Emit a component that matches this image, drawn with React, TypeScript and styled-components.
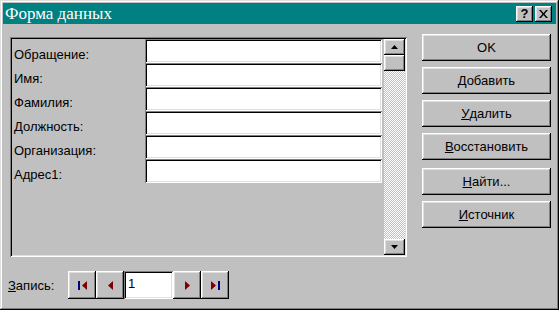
import React from "react";
import styled, { createGlobalStyle, css } from "styled-components";

const fields = ["Обращение:", "Имя:", "Фамилия:", "Должность:", "Организация:", "Адрес1:"];

function App() {
  return (
    <>
      <GlobalStyle />
      <Window>
        <TitleBar>
          <Title>Форма данных</Title>
          <CaptionButtons>
            <CaptionButton>?</CaptionButton>
            <CaptionButton>
              <svg width="9" height="8" viewBox="0 0 9 8">
                <path d="M0 0h2l2.5 3 2.5-3h2L5.5 4 9 8H7L4.5 5 2 8H0l3.5-4z" fill="#000" />
              </svg>
            </CaptionButton>
          </CaptionButtons>
        </TitleBar>
        <Body>
          <LeftColumn>
            <Panel>
              <Fields>
                {fields.map((f) => (
                  <Row key={f}>
                    <Label>{f}</Label>
                    <Field />
                  </Row>
                ))}
              </Fields>
              <ScrollBar>
                <ScrollButton>
                  <svg width="7" height="4" viewBox="0 0 7 4">
                    <path d="M3.5 0L7 4H0z" fill="#000" />
                  </svg>
                </ScrollButton>
                <ScrollButton />
                <Track />
                <ScrollButton>
                  <svg width="7" height="4" viewBox="0 0 7 4">
                    <path d="M0 0h7L3.5 4z" fill="#000" />
                  </svg>
                </ScrollButton>
              </ScrollBar>
            </Panel>
            <RecordRow>
              <RecordLabel>
                <u>З</u>апись:
              </RecordLabel>
              <NavButton>
                <svg width="9" height="9" viewBox="0 0 9 9">
                  <rect x="0" y="0" width="2" height="9" fill="#000080" />
                  <path d="M9 0v9L4 4.5z" fill="#800000" />
                </svg>
              </NavButton>
              <NavButton>
                <svg width="5" height="9" viewBox="0 0 5 9">
                  <path d="M5 0v9L0 4.5z" fill="#800000" />
                </svg>
              </NavButton>
              <RecordInput>1</RecordInput>
              <NavButton>
                <svg width="5" height="9" viewBox="0 0 5 9">
                  <path d="M0 0v9l5-4.5z" fill="#800000" />
                </svg>
              </NavButton>
              <NavButton>
                <svg width="9" height="9" viewBox="0 0 9 9">
                  <path d="M0 0v9l5-4.5z" fill="#800000" />
                  <rect x="7" y="0" width="2" height="9" fill="#000080" />
                </svg>
              </NavButton>
            </RecordRow>
          </LeftColumn>
          <RightColumn>
            <Button>OK</Button>
            <Button>
              <u>Д</u>обавить
            </Button>
            <Button>
              <u>У</u>далить
            </Button>
            <Button>
              <u>В</u>осстановить
            </Button>
            <Button spaced>
              <u>Н</u>айти...
            </Button>
            <Button>
              <u>И</u>сточник
            </Button>
          </RightColumn>
        </Body>
      </Window>
    </>
  );
}

export default App;

const GlobalStyle = createGlobalStyle`
  html, body {
    margin: 0;
    padding: 0;
    background: #c0c0c0;
  }
  * {
    box-sizing: border-box;
  }
`;

const raised = css`
  background: #c0c0c0;
  box-shadow: inset -1px -1px #000, inset 1px 1px #fff, inset -2px -2px #808080,
    inset 2px 2px #dfdfdf;
`;

const sunken = css`
  background: #fff;
  box-shadow: inset 1px 1px #808080, inset -1px -1px #fff, inset 2px 2px #000,
    inset -2px -2px #dfdfdf;
`;

const Window = styled.div`
  width: 559px;
  height: 310px;
  padding: 3px;
  background: #c0c0c0;
  box-shadow: inset -1px -1px #000, inset 1px 1px #dfdfdf, inset -2px -2px #808080,
    inset 2px 2px #fff;
  display: flex;
  flex-direction: column;
  font-family: "Liberation Sans", Arial, sans-serif;
  font-size: 13px;
  color: #000;
`;

const TitleBar = styled.div`
  height: 21px;
  background: #008080;
  display: flex;
  align-items: center;
  justify-content: space-between;
  padding: 0 4px 0 2px;
`;

const Title = styled.div`
  font-family: "Liberation Serif", "Times New Roman", serif;
  font-size: 17px;
  color: #fff;
  line-height: 21px;
`;

const CaptionButtons = styled.div`
  display: flex;
  gap: 2px;
`;

const CaptionButton = styled.div`
  ${raised};
  width: 17px;
  height: 16px;
  display: flex;
  align-items: center;
  justify-content: center;
  font-weight: 700;
  font-size: 13px;
  line-height: 16px;
`;

const Body = styled.div`
  flex: 1;
  display: flex;
  padding-left: 4px;
  gap: 15px;
`;

const LeftColumn = styled.div`
  width: 400px;
  display: flex;
  flex-direction: column;
  padding-top: 13px;
`;

const Panel = styled.div`
  margin-left: 3px;
  width: 397px;
  height: 220px;
  padding: 2px;
  display: flex;
  gap: 2px;
  box-shadow: inset 1px 1px #808080, inset -1px -1px #fff, inset 2px 2px #000,
    inset -2px -2px #dfdfdf;
`;

const Fields = styled.div`
  width: 370px;
  display: flex;
  flex-direction: column;
`;

const Row = styled.div`
  display: flex;
  height: 24px;
`;

const Label = styled.div`
  width: 133px;
  padding: 4px 0 0 2px;
  line-height: 24px;
`;

const Field = styled.div`
  ${sunken};
  width: 237px;
  height: 24px;
`;

const ScrollBar = styled.div`
  width: 21px;
  display: flex;
  flex-direction: column;
`;

const ScrollButton = styled.div`
  ${raised};
  height: 16px;
  display: flex;
  align-items: center;
  justify-content: center;
`;

const Track = styled.div`
  flex: 1;
  background-image: conic-gradient(#fff 25%, #c0c0c0 0 50%, #fff 0 75%, #c0c0c0 0);
  background-size: 2px 2px;
`;

const RecordRow = styled.div`
  margin-top: 14px;
  height: 28px;
  display: flex;
  align-items: center;
  padding-left: 1px;
`;

const RecordLabel = styled.div`
  width: 60px;
`;

const NavButton = styled.div`
  ${raised};
  width: 28px;
  height: 28px;
  display: flex;
  align-items: center;
  justify-content: center;
`;

const RecordInput = styled.div`
  ${sunken};
  width: 49px;
  height: 28px;
  padding: 5px 0 0 4px;
  line-height: 15px;
`;

const RightColumn = styled.div`
  width: 129px;
  display: flex;
  flex-direction: column;
  gap: 6px;
  padding-top: 10px;
`;

const Button = styled.div<{ spaced?: boolean }>`
  ${raised};
  height: 27px;
  display: flex;
  align-items: center;
  justify-content: center;
  margin-top: ${(p) => (p.spaced ? "2px" : "0")};
`;
